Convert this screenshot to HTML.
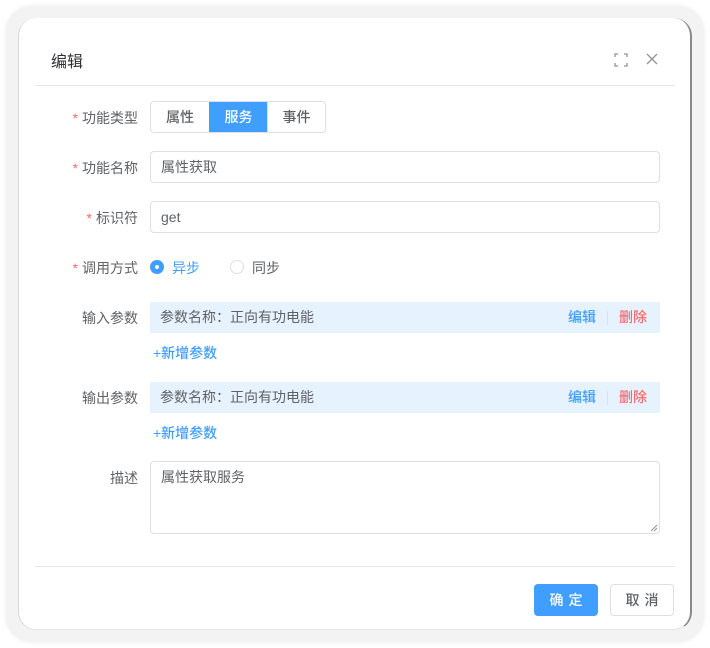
<!DOCTYPE html>
<html><head><meta charset="utf-8"><style>
*{box-sizing:border-box;margin:0;padding:0}
body{width:710px;height:648px;background:#fff;font-family:"Liberation Sans","Noto Sans CJK SC",sans-serif;position:relative;overflow:hidden;color:#606266;font-size:14px}
.shadow{position:absolute;left:6px;top:6px;width:698px;height:636px;border-radius:26px;background:#f3f3f3;box-shadow:0 0 4px #ececec}
.dlg{position:absolute;left:18px;top:18px;width:674px;height:612px;background:#fff;border-radius:18px;border-left:1px solid #d8d8d8;border-right:2px solid #8a8a8a;border-bottom:1px solid #e4e4e4}
.abs{position:absolute}
.title{left:32px;top:30px;font-size:16px;color:#303133}
.hr{left:16px;height:1px;width:640px;background:#e4e7ed}
.lbl{position:absolute;right:552px;font-size:14px;color:#606266;white-space:nowrap}
.lbl i{color:#f56c6c;font-style:normal;margin-right:4px}
.inp{position:absolute;left:131px;width:510px;height:32px;border:1px solid #dcdfe6;border-radius:4px;padding:0 10px;line-height:30px;color:#606266}
.seg{position:absolute;left:131px;top:83px;height:32px;display:flex;border:1px solid #dcdfe6;border-radius:4px;overflow:hidden;font-weight:500}
.seg div{width:58px;text-align:center;line-height:30px;color:#606266;border-left:1px solid #dcdfe6}
.seg div:first-child{border-left:none}
.seg .on{background:#409eff;color:#fff;border-color:#409eff}
.param{position:absolute;left:131px;width:510px;height:31px;background:#e6f2fe;padding-left:10px;line-height:31px}
.param .ed{position:absolute;right:64px;color:#409eff;font-weight:500}
.param .sep{position:absolute;right:52px;top:9px;width:1px;height:14px;background:#d6e4f2}
.param .del{position:absolute;right:13px;color:#f56c6c;font-weight:500}
.add{position:absolute;left:134px;color:#409eff;font-weight:500}
.btn{position:absolute;top:566px;height:32px;border-radius:4px;text-align:center;line-height:30px;letter-spacing:5px;font-size:14px;font-weight:500}
</style></head><body>
<div class="shadow"></div>
<div class="dlg">
<div class="abs title">编辑</div>
<svg class="abs" style="left:595px;top:35px" width="14" height="14" viewBox="0 0 14 14" fill="none" stroke="#909399" stroke-width="1.3"><path d="M1 4V1h3M10 1h3v3M13 10v3h-3M4 13H1v-3"/></svg>
<svg class="abs" style="left:627px;top:35px" width="12" height="12" viewBox="0 0 12 12" stroke="#909399" stroke-width="1.3"><path d="M1 1l10 10M11 1L1 11"/></svg>
<div class="abs hr" style="top:67px"></div>

<div class="lbl" style="top:90px"><i>*</i>功能类型</div>
<div class="seg"><div>属性</div><div class="on">服务</div><div>事件</div></div>

<div class="lbl" style="top:140px"><i>*</i>功能名称</div>
<div class="inp" style="top:133px">属性获取</div>

<div class="lbl" style="top:190px"><i>*</i>标识符</div>
<div class="inp" style="top:183px">get</div>

<div class="lbl" style="top:240px"><i>*</i>调用方式</div>
<div class="abs" style="left:131px;top:242px;width:14px;height:14px;border-radius:50%;background:#409eff"><div style="position:absolute;left:5px;top:5px;width:4px;height:4px;border-radius:50%;background:#fff"></div></div>
<div class="abs" style="left:153px;top:240px;color:#409eff">异步</div>
<div class="abs" style="left:211px;top:242px;width:14px;height:14px;border-radius:50%;border:1px solid #dcdfe6"></div>
<div class="abs" style="left:233px;top:240px">同步</div>

<div class="lbl" style="top:290px">输入参数</div>
<div class="param" style="top:284px">参数名称：正向有功电能<span class="ed">编辑</span><span class="sep"></span><span class="del">删除</span></div>
<div class="add" style="top:325px">+新增参数</div>

<div class="lbl" style="top:370px">输出参数</div>
<div class="param" style="top:364px">参数名称：正向有功电能<span class="ed">编辑</span><span class="sep"></span><span class="del">删除</span></div>
<div class="add" style="top:405px">+新增参数</div>

<div class="lbl" style="top:450px">描述</div>
<div class="inp" style="top:443px;height:73px;line-height:1.4;padding-top:6px">属性获取服务
<svg style="position:absolute;right:1px;bottom:1px" width="8" height="8" viewBox="0 0 8 8" stroke="#909399" stroke-width="1"><path d="M7 1L1 7M7 4L4 7"/></svg></div>

<div class="abs hr" style="top:548px"></div>
<div class="btn" style="left:515px;width:64px;background:#409eff;color:#fff;border:1px solid #409eff;padding-left:5px">确定</div>
<div class="btn" style="left:591px;width:64px;border:1px solid #dcdfe6;color:#606266;padding-left:5px">取消</div>
</div>
</body></html>
